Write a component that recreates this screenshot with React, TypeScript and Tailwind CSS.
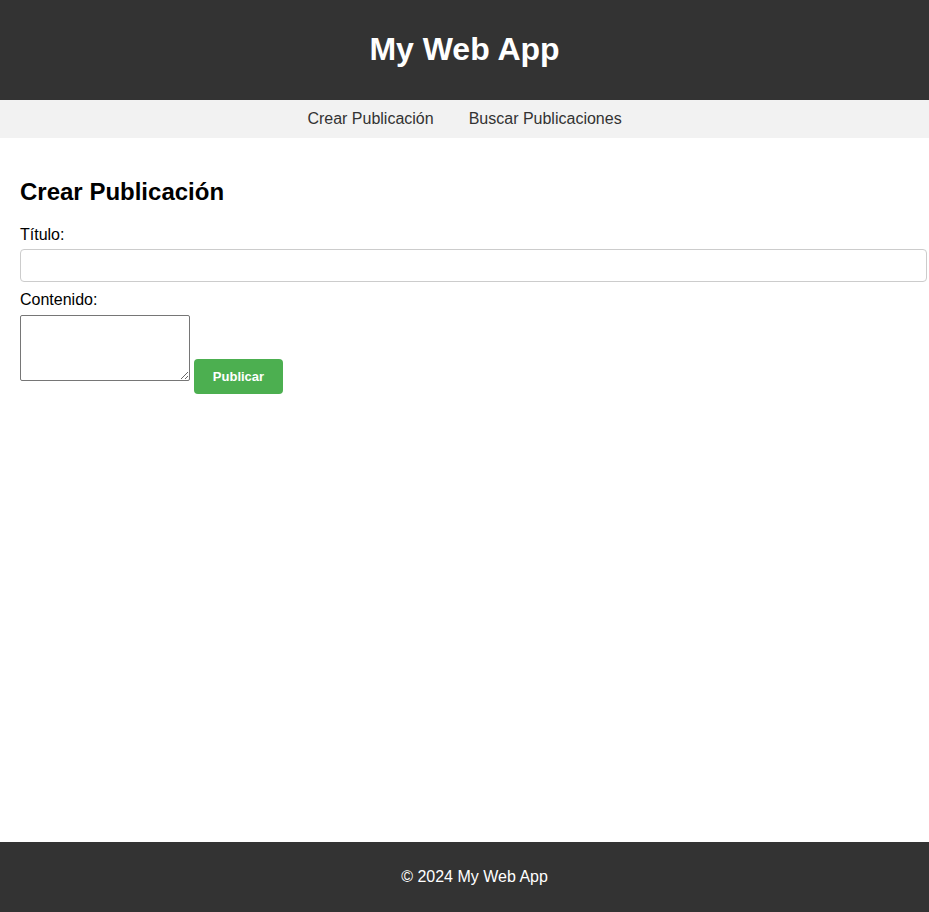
export default function App() {
  return (
    <div className="flex min-h-screen flex-col bg-white font-['Liberation_Sans',Arial,sans-serif] text-black">
      <header className="flex h-[100px] items-center justify-center bg-[#333] pb-[2px] text-white">
        <h1 className="text-[32px] font-bold leading-[37px]">My Web App</h1>
      </header>

      <nav className="flex h-[38px] items-center justify-center gap-[35px] bg-[#f2f2f2] text-[16px] text-[#333]">
        <a href="#">Crear Publicación</a>
        <a href="#">Buscar Publicaciones</a>
      </nav>

      <main className="flex-1 p-5">
        <h2 className="mt-5 mb-5 text-[24px] font-bold leading-[28px]">Crear Publicación</h2>
        <form className="flex flex-col" onSubmit={e => e.preventDefault()}>
          <label className="mb-[5px] text-[16px] leading-[18px]">Título:</label>
          <input
            type="text"
            className="mb-[9px] h-[33px] w-[calc(100%+18px)] rounded border border-[#ccc] px-2 text-[13px] outline-none"
          />
          <label className="mb-[6px] text-[16px] leading-[18px]">Contenido:</label>
          <div className="flex items-start gap-1">
            <textarea className="h-[66px] w-[170px] rounded-[2px] border border-[#767676] p-[2px] text-[13px] outline-none" />
            <button
              type="submit"
              className="mt-[44px] h-[35px] w-[89px] rounded bg-[#4caf50] text-[13px] font-bold text-white"
            >
              Publicar
            </button>
          </div>
        </form>
      </main>

      <footer className="flex h-[70px] items-center justify-center bg-[#333] pl-5 text-[16px] text-white">
        © 2024 My Web App
      </footer>
    </div>
  )
}
